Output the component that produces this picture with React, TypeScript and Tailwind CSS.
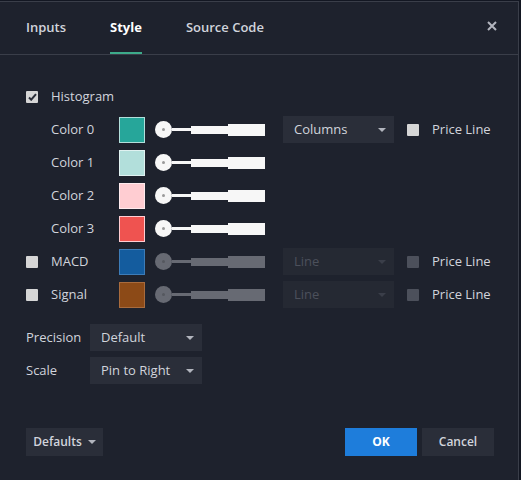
import React from 'react'

type Row = { label: string; color: string; border: string }

const colorRows: Row[] = [
  { label: 'Color 0', color: '#26a69a', border: '#b2dfdb' },
  { label: 'Color 1', color: '#b2dfdb', border: '#e0f2f1' },
  { label: 'Color 2', color: '#ffcdd2', border: '#ffebee' },
  { label: 'Color 3', color: '#ef5350', border: '#ffcdd2' },
]

function Caret({ dim }: { dim?: boolean }) {
  return (
    <svg width="8" height="4" viewBox="0 0 8 4" className="shrink-0">
      <path d="M0 0h8L4 4z" fill={dim ? '#3a3e49' : '#b2b5be'} />
    </svg>
  )
}

function Select({ value, width, dim }: { value: string; width: string; dim?: boolean }) {
  return (
    <div
      className={`${width} h-[27px] flex items-center justify-between pl-[11px] pr-[8px] ${
        dim ? 'bg-[#252933] text-[#4c505b]' : 'bg-[#2a2e39] text-[#d1d4dc]'
      }`}
    >
      <span>{value}</span>
      <Caret dim={dim} />
    </div>
  )
}

function Checkbox({ checked, tone = 'light' }: { checked?: boolean; tone?: 'light' | 'dim' }) {
  return (
    <div
      className={`w-[12px] h-[12px] rounded-[1px] flex items-center justify-center ${
        tone === 'dim' ? 'bg-[#4c505b]' : 'bg-[#d6d6d6]'
      }`}
    >
      {checked && (
        <svg width="9" height="8" viewBox="0 0 9 8">
          <path d="M1 4.5l2.2 2.2L8 1.2" stroke="#2a2e39" strokeWidth="2" fill="none" />
        </svg>
      )}
    </div>
  )
}

function Slider({ dim }: { dim?: boolean }) {
  const c = dim ? 'bg-[#676a73]' : 'bg-[#f7f7f7]'
  return (
    <div className="flex items-center w-[110px]">
      <div className={`w-[17px] h-[17px] rounded-full ${c} flex items-center justify-center shrink-0`}>
        <div className={`w-[3px] h-[3px] rounded-full ${dim ? 'bg-[#55585f]' : 'bg-[#9a9a9a]'}`} />
      </div>
      <div className={`w-[19px] h-[3px] ${c}`} />
      <div className={`w-[37px] h-[8px] ${c}`} />
      <div className={`w-[37px] h-[12px] ${c}`} />
    </div>
  )
}

function Swatch({ color, border }: { color: string; border: string }) {
  return (
    <div className="w-[26px] h-[26px] p-[1px] shrink-0" style={{ background: border }}>
      <div className="w-full h-full" style={{ background: color }} />
    </div>
  )
}

export default function App() {
  return (
    <div
      className="w-[521px] h-[480px] bg-[#131722] overflow-hidden text-[13px] text-[#d1d4dc]"
      style={{ fontFamily: '"Open Sans", "DejaVu Sans", sans-serif' }}
    >
      <div className="w-[519px] h-[479px] mt-[1px] bg-[#1e222d] border-t border-r border-[#3a3e49] flex flex-col">
        {/* tabs */}
        <div className="h-[53px] border-b border-[#3a3e49] flex items-stretch pl-[26px] pr-[21px]">
          <div className="flex items-center text-[13px] font-semibold text-[#d1d4dc] mr-[44px]">Inputs</div>
          <div className="relative flex items-center text-[13px] font-bold text-white mr-[44px]">
            Style
            <div className="absolute left-0 right-0 bottom-0 h-[2px] bg-[#3dab8a]" />
          </div>
          <div className="flex items-center text-[13px] font-semibold text-[#d1d4dc]">Source Code</div>
          <div className="ml-auto flex items-center pb-[4px]">
            <svg width="10" height="10" viewBox="0 0 10 10">
              <path d="M1 1l8 8M9 1l-8 8" stroke="#b2b5be" strokeWidth="2" />
            </svg>
          </div>
        </div>

        <div className="flex flex-col pt-[25px] pl-[26px]">
          <div className="h-[33px] flex items-center">
            <div className="w-[25px]"><Checkbox checked /></div>
            <span>Histogram</span>
          </div>

          {colorRows.map((r, i) => (
            <div key={r.label} className="h-[33px] flex items-center">
              <div className="w-[25px]" />
              <span className="w-[68px]">{r.label}</span>
              <Swatch color={r.color} border={r.border} />
              <div className="ml-[10px]"><Slider /></div>
              {i === 0 && (
                <div className="flex items-center ml-[18px]">
                  <Select value="Columns" width="w-[111px]" />
                  <div className="ml-[13px] mr-[13px]"><Checkbox /></div>
                  <span>Price Line</span>
                </div>
              )}
            </div>
          ))}

          {[
            { label: 'MACD', color: '#145c9e', border: '#3d7cb8' },
            { label: 'Signal', color: '#8c4a17', border: '#a86b3d' },
          ].map(r => (
            <div key={r.label} className="h-[33px] flex items-center">
              <div className="w-[25px]"><Checkbox /></div>
              <span className="w-[68px]">{r.label}</span>
              <Swatch color={r.color} border={r.border} />
              <div className="ml-[10px]"><Slider dim /></div>
              <div className="flex items-center ml-[18px]">
                <Select value="Line" width="w-[111px]" dim />
                <div className="ml-[13px] mr-[13px]"><Checkbox tone="dim" /></div>
                <span>Price Line</span>
              </div>
            </div>
          ))}

          <div className="h-[10px]" />
          <div className="h-[33px] flex items-center">
            <span className="w-[64px]">Precision</span>
            <Select value="Default" width="w-[112px]" />
          </div>
          <div className="h-[33px] flex items-center">
            <span className="w-[64px]">Scale</span>
            <Select value="Pin to Right" width="w-[112px]" />
          </div>
        </div>

        <div className="mt-auto mb-[24px] flex items-center pl-[26px] pr-[24px]">
          <div className="h-[28px] w-[77px] bg-[#2a2e39] flex items-center justify-center gap-[6px] text-[12px] font-semibold">
            Defaults
            <Caret />
          </div>
          <div className="ml-auto h-[28px] w-[72px] bg-[#1e7ddb] text-white flex items-center justify-center text-[12px] font-bold">
            OK
          </div>
          <div className="ml-[5px] h-[28px] w-[72px] bg-[#2a2e39] flex items-center justify-center text-[12px] font-semibold">
            Cancel
          </div>
        </div>
      </div>
    </div>
  )
}
